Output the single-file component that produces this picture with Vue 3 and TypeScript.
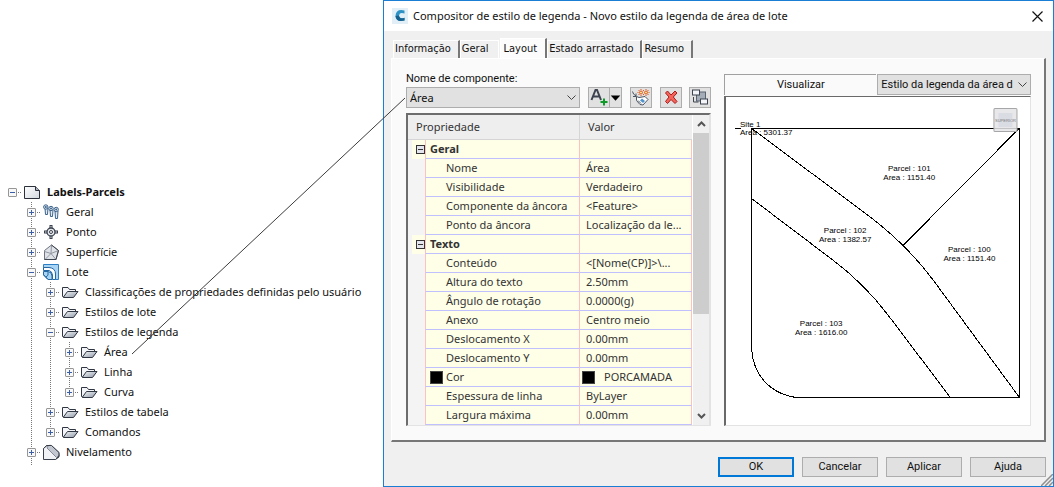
<script setup lang="ts">
import { ref } from 'vue'

type IconName = 'sheet' | 'markers' | 'point' | 'surface' | 'lot' | 'folder' | 'grading'

interface TreeRow {
  label: string
  icon: IconName
  open?: boolean
}

interface Level2 extends TreeRow {
  children?: TreeRow[]
}

interface Level1 extends TreeRow {
  children?: Level2[]
}

interface Property {
  name: string
  value: string
  group?: boolean
  swatch?: boolean
}

const tree: Level1[] = [
  { label: 'Geral', icon: 'markers' },
  { label: 'Ponto', icon: 'point' },
  { label: 'Superfície', icon: 'surface' },
  {
    label: 'Lote',
    icon: 'lot',
    open: true,
    children: [
      { label: 'Classificações de propriedades definidas pelo usuário', icon: 'folder' },
      { label: 'Estilos de lote', icon: 'folder' },
      {
        label: 'Estilos de legenda',
        icon: 'folder',
        open: true,
        children: [
          { label: 'Área', icon: 'folder' },
          { label: 'Linha', icon: 'folder' },
          { label: 'Curva', icon: 'folder' },
        ],
      },
      { label: 'Estilos de tabela', icon: 'folder' },
      { label: 'Comandos', icon: 'folder' },
    ],
  },
  { label: 'Nivelamento', icon: 'grading' },
]

const tabs = ['Informação', 'Geral', 'Layout', 'Estado arrastado', 'Resumo']
const activeTab = ref('Layout')

const properties: Property[] = [
  { name: 'Geral', value: '', group: true },
  { name: 'Nome', value: 'Área' },
  { name: 'Visibilidade', value: 'Verdadeiro' },
  { name: 'Componente da âncora', value: '<Feature>' },
  { name: 'Ponto da âncora', value: 'Localização da le...' },
  { name: 'Texto', value: '', group: true },
  { name: 'Conteúdo', value: '<[Nome(CP)]>\\...' },
  { name: 'Altura do texto', value: '2.50mm' },
  { name: 'Ângulo de rotação', value: '0.0000(g)' },
  { name: 'Anexo', value: 'Centro meio' },
  { name: 'Deslocamento X', value: '0.00mm' },
  { name: 'Deslocamento Y', value: '0.00mm' },
  { name: 'Cor', value: 'PORCAMADA', swatch: true },
  { name: 'Espessura de linha', value: 'ByLayer' },
  { name: 'Largura máxima', value: '0.00mm' },
]

const parcels = [
  { x: 183, y: 74, name: 'Parcel : 101', area: 'Area : 1151.40' },
  { x: 119, y: 136, name: 'Parcel : 102', area: 'Area : 1382.57' },
  { x: 243, y: 155, name: 'Parcel : 100', area: 'Area : 1151.40' },
  { x: 95, y: 229, name: 'Parcel : 103', area: 'Area : 1616.00' },
]

const actions = ['OK', 'Cancelar', 'Aplicar', 'Ajuda']
</script>

<template>
  <!-- Icon shapes shared by the tree rows -->
  <svg class="defs" aria-hidden="true">
    <defs>
      <linearGradient id="gFolder" x1="0" y1="0" x2="1" y2="1">
        <stop offset="0" stop-color="#f4f6f9" />
        <stop offset="1" stop-color="#8f98a6" />
      </linearGradient>
      <linearGradient id="gSheet" x1="0" y1="0" x2="1" y2="1">
        <stop offset="0" stop-color="#ffffff" />
        <stop offset="1" stop-color="#d3d8e0" />
      </linearGradient>
      <symbol id="sheet" viewBox="0 0 17 17">
        <path d="M.5 2.500H11.500L15.500 6.500V14.500H.5z" fill="url(#gSheet)" stroke="#2b303b" />
        <path d="M11.500 2.500V6.500H15.500" fill="#aab1bd" stroke="#2b303b" />
      </symbol>
      <symbol id="markers" viewBox="0 0 17 17">
        <g fill="#dfeaf5" stroke="#3d6289">
          <path d="M2 4L2.500 10.500H4.500L5 4" />
          <circle cx="2.800" cy="3" r="2.200" />
          <path d="M7 6L7.500 12.500H9.500L10 6" />
          <circle cx="8" cy="4.500" r="2.200" />
          <path d="M12 7L12.500 14.500H14.500L15 7" />
          <circle cx="13.200" cy="5.500" r="2.200" />
        </g>
        <g fill="#3d6289"><circle cx="2.800" cy="3" r="1" /><circle cx="8" cy="4.500" r="1" /><circle cx="13.200" cy="5.500" r="1" /></g>
      </symbol>
      <symbol id="point" viewBox="0 0 17 17">
        <path d="M8 1V15M1 8H15" stroke="#3a414d" stroke-width="3" />
        <path d="M8 2V14M2 8H14" stroke="#e6e9ee" />
        <circle cx="8" cy="8" r="4" fill="#e6e9ee" stroke="#3a414d" stroke-width="1.300" />
        <circle cx="8" cy="8" r="1.500" fill="#fff" stroke="#3a414d" />
      </symbol>
      <symbol id="surface" viewBox="0 0 17 17">
        <path d="M8.500 1L15.500 6.500 13 15.500H1.500V6.500z" fill="#dfe2e6" stroke="#6f7682" />
        <path d="M8.500 1L8 9.500 1.500 7.500M8 9.500L15.500 6.500M8 9.500L2 15.500M8 9.500L13 15.500" fill="none" stroke="#9299a3" />
        <path d="M8.500 1L15.500 6.500 13 15.500H1.500" fill="none" stroke="#3f4550" />
      </symbol>
      <symbol id="lot" viewBox="0 0 17 17">
        <path d="M.5 .5H15.500V15.500H12.500V9L8 4H.5z" fill="#a9d5f5" stroke="#2c7fc4" />
        <path d="M.5 3.500H6Q12.500 4 12.500 10V15.500H9.500V11Q9 7 6 6.500H.5z" fill="#fff" stroke="#2468a3" />
        <path d="M.5 7.500H5Q9 8 9 12V15.500H5L.5 11z" fill="#a9d5f5" stroke="#2468a3" />
        <path d="M.5 10.500L5 15.500M5 8Q6 12 3 13" fill="none" stroke="#2468a3" />
      </symbol>
      <symbol id="folder" viewBox="0 0 17 17">
        <path d="M.5 12.500V3.500H6L7.500 5.500H13.500V7.500L10 13H1.500z" fill="#f3f5f8" stroke="#2f3541" />
        <path d="M1.500 13L5.500 7.500H16L11.500 13.500H1.500z" fill="url(#gFolder)" stroke="#2f3541" />
      </symbol>
      <symbol id="grading" viewBox="0 0 17 17">
        <path d="M.5 15.500V4.500L4 1.500 16 10.500V13L12.500 15.500z" fill="#f1f2f5" stroke="#3a414d" />
        <path d="M4 4Q5 .5 8.500 1.500L16 8.500V11L13.500 13.500z" fill="#c2c7d0" stroke="#848b97" />
        <path d="M.5 4.500L3.500 1.500H8.500L16 8.500V12L12.500 15.500" fill="none" stroke="#3a414d" />
      </symbol>
    </defs>
  </svg>

  <div class="page">
    <nav class="tree" aria-label="Configurações">
      <div class="row root">
        <button class="expander" type="button" aria-label="Labels-Parcels"></button>
        <svg class="icon"><use href="#sheet" /></svg>
        <span>Labels-Parcels</span>
      </div>
      <ul class="branch first">
        <li v-for="a in tree" :key="a.label">
          <div class="row">
            <button class="expander" :class="{ plus: !a.open }" type="button" :aria-label="a.label"></button>
            <svg class="icon"><use :href="'#' + a.icon" /></svg>
            <span>{{ a.label }}</span>
          </div>
          <ul v-if="a.children" class="branch">
            <li v-for="b in a.children" :key="b.label">
              <div class="row">
                <button class="expander" :class="{ plus: !b.open }" type="button" :aria-label="b.label"></button>
                <svg class="icon"><use :href="'#' + b.icon" /></svg>
                <span>{{ b.label }}</span>
              </div>
              <ul v-if="b.children" class="branch">
                <li v-for="c in b.children" :key="c.label">
                  <div class="row">
                    <button class="expander plus" type="button" :aria-label="c.label"></button>
                    <svg class="icon"><use :href="'#' + c.icon" /></svg>
                    <span>{{ c.label }}</span>
                  </div>
                </li>
              </ul>
            </li>
          </ul>
        </li>
      </ul>
    </nav>

    <section class="dialog" role="dialog" aria-labelledby="dlgTitle">
      <header class="titlebar">
        <svg class="logo" viewBox="0 0 16 16" aria-hidden="true">
          <rect width="16" height="16" fill="#e3eff6" />
          <path d="M12.500 5.500V2.500Q4 .5 3.500 8 4 14.500 12.500 12.500V9.800Q7.500 11.500 7 7.500 7.500 4 12.500 5.500z" fill="#2e93c4" />
          <path d="M3.500 8Q4 14.500 12.500 12.500V9.800Q7.500 11.500 7 7.500z" fill="#17618f" />
        </svg>
        <h1 id="dlgTitle">Compositor de estilo de legenda - Novo estilo da legenda de área de lote</h1>
        <button class="close" type="button" aria-label="Fechar">
          <svg viewBox="0 0 11 11"><path d="M.5 .5L10.500 10.500M10.500 .5L.5 10.500" stroke="#111" stroke-width="1.200" /></svg>
        </button>
      </header>

      <div class="tabs" role="tablist">
        <button
          v-for="t in tabs"
          :key="t"
          class="tab"
          :class="{ active: t === activeTab }"
          type="button"
          role="tab"
          :aria-selected="t === activeTab"
          @click="activeTab = t"
        >{{ t }}</button>
      </div>

      <div class="panel">
        <div class="composer">
          <label class="caption" for="component">Nome de componente:</label>
          <div class="toolbar">
            <div class="combo">
              <select id="component"><option>Área</option></select>
              <svg class="chevron" viewBox="0 0 9 6"><path d="M.5 .5L4.500 4.500 8.500 .5" /></svg>
            </div>
            <div class="split">
              <button class="tool" type="button" aria-label="Criar componente de texto">
                <svg viewBox="0 0 20 18">
                  <path d="M2.500 11.500L6.500 1.500H8L12 11.500M4 8H10.500" fill="none" stroke="#3d4450" stroke-width="2" />
                  <path d="M15 10V17M11.500 13.500H18.500" stroke="#0e9a28" stroke-width="2" />
                </svg>
              </button>
              <button class="tool drop" type="button" aria-label="Mais tipos">
                <svg viewBox="0 0 10 18"><path d="M.5 7H9.500L5 12z" fill="#000" /></svg>
              </button>
            </div>
            <button class="tool" type="button" aria-label="Copiar componente">
              <svg viewBox="0 0 20 18">
                <path d="M5.500 8L8 9 14 8 17 11 12 16.500 9 16 5.500 12z" fill="#fff" stroke="#4d5563" />
                <path d="M1.500 3Q2 6 5 7.500M5 5V8H2M7 12L10 15" fill="none" stroke="#4d5563" />
                <path d="M11 10L14 12.500 12 14.500 9 12z" fill="#4f93cf" />
                <g fill="#ffe08a" stroke="#e0561e"><circle cx="10" cy="4" r="1.500" /><circle cx="15" cy="4" r="1.500" /></g>
                <path d="M10 .5V1.500M10 6.500V7.500M15 .5V1.500M15 6.500V7.500M6.500 4H7.500M17.500 4H18.500M7.500 1.500L8.500 2.500M17.500 1.500L16.500 2.500M7.500 6.500L8.500 5.500M17.500 6.500L16.500 5.500M12.500 1.500V2.500M12.500 5.500V6.500" stroke="#e0561e" />
              </svg>
            </button>
            <button class="tool" type="button" aria-label="Excluir componente">
              <svg viewBox="0 0 20 18">
                <path d="M4.500 4.500L6.500 2.500 10 6.500 14 2.500 16 4.500 12.300 8.500 16 13 14 15 10 11 6.500 15 4.500 13 8 8.500z" fill="#f4645a" stroke="#a81d1d" />
              </svg>
            </button>
            <button class="tool" type="button" aria-label="Ordem dos componentes">
              <svg viewBox="0 0 20 18">
                <g fill="#f2f4f7" stroke="#3d4450">
                  <rect x="6.500" y="3.500" width="9" height="9" fill="#a4acb8" stroke="#5b6370" />
                  <rect x="2.500" y="1.500" width="7" height="5" />
                  <rect x="10.500" y="10.500" width="7" height="5" />
                  <path d="M3.500 8.500V13.500H8.500" fill="none" />
                </g>
              </svg>
            </button>
          </div>

          <div class="grid">
            <table>
              <colgroup><col class="c-gutter" /><col class="c-name" /><col /></colgroup>
              <thead>
                <tr><th colspan="2" scope="col">Propriedade</th><th scope="col">Valor</th></tr>
              </thead>
              <tbody>
                <tr v-for="p in properties" :key="p.name" :class="{ group: p.group }">
                  <td class="gutter">
                    <button v-if="p.group" class="fold" type="button" :aria-label="p.name"></button>
                  </td>
                  <td class="name">
                    <div class="cell"><i v-if="p.swatch" class="swatch"></i>{{ p.name }}</div>
                  </td>
                  <td class="value">
                    <div class="cell"><i v-if="p.swatch" class="swatch"></i>{{ p.value }}</div>
                  </td>
                </tr>
              </tbody>
            </table>
            <div class="scroll" aria-hidden="true">
              <svg viewBox="0 0 9 6"><path d="M1 5L4.500 1.500 8 5" /></svg>
              <div class="track"><div class="thumb"></div></div>
              <svg viewBox="0 0 9 6"><path d="M1 1L4.500 4.500 8 1" /></svg>
            </div>
          </div>
        </div>

        <div class="preview">
          <div class="preview-head">
            <label class="preview-label" for="style">Visualizar</label>
            <div class="combo">
              <select id="style"><option>Estilo da legenda da área d</option></select>
              <svg class="chevron" viewBox="0 0 9 6"><path d="M.5 .5L4.500 4.500 8.500 .5" /></svg>
            </div>
          </div>
          <div class="canvas">
            <svg viewBox="0 0 303 327" role="img" aria-label="Lote">
              <g fill="none" stroke="#000" shape-rendering="crispEdges">
                <path d="M9 31.500H15M25.500 31.500H293.500V300.500H79C49 300.500 25.500 281 25.500 247z" />
                <path d="M25 31L139 116Q180 146.500 207 183L293 300" />
                <path d="M25 101L107 163Q138 186.400 162 218L224 300" />
                <path d="M293 31L176 149" />
              </g>
              <g class="cad">
                <text x="14" y="30">Site 1</text>
                <text x="14" y="38">Area : 5301.37</text>
                <g v-for="p in parcels" :key="p.name" text-anchor="middle">
                  <text :x="p.x" :y="p.y">{{ p.name }}</text>
                  <text :x="p.x" :y="p.y + 9">{{ p.area }}</text>
                </g>
              </g>
              <rect x="267.500" y="11.500" width="23" height="23" rx="1" fill="#e4e4e6" fill-opacity=".85" stroke="#a6a6a8" />
              <rect x="272" y="16" width="14" height="14" fill="#dadce3" />
              <text class="cube" x="279" y="25" text-anchor="middle">SUPERIOR</text>
            </svg>
          </div>
        </div>
      </div>

      <footer class="actions">
        <button v-for="a in actions" :key="a" type="button" :class="{ primary: a === 'OK' }">{{ a }}</button>
        <svg class="grip" viewBox="0 0 12 12" aria-hidden="true">
          <path d="M0 12L12 0M4 12L12 4M8 12L12 8" stroke="#8f8f8f" stroke-width="1.500" />
        </svg>
      </footer>
    </section>

    <svg class="leader" width="280" height="262" viewBox="0 0 280 262" aria-hidden="true">
      <path d="M2 258L275 2" stroke="#3c3c3c" fill="none" />
    </svg>
  </div>
</template>

<style>
body {
  background: #fff;
}
</style>

<style scoped>
.defs {
  position: absolute;
  width: 0;
  height: 0;
}
.page {
  position: relative;
  display: flex;
  align-items: flex-start;
  font: 11px/20px "Noto Sans", "Open Sans", sans-serif;
  color: #111;
}
button,
select {
  font: inherit;
  color: inherit;
  margin: 0;
  padding: 0;
}
svg {
  display: block;
}

/* tree */
.tree {
  flex: 0 0 375px;
  min-width: 0;
  padding: 182px 0 0 8px;
  white-space: nowrap;
}
ul {
  list-style: none;
  margin: 0;
  padding: 0;
}
.row {
  display: flex;
  align-items: center;
  height: 20px;
  background: repeating-linear-gradient(90deg, #777 0 1px, transparent 1px 2px) 10px 50% / 4px 1px no-repeat;
}
.root {
  font-weight: 700;
}
.branch {
  margin-left: 19px;
  background: repeating-linear-gradient(#777 0 1px, transparent 1px 2px) 4px 0 / 1px calc(100% - 10px) no-repeat;
}
.branch.first {
  padding-bottom: 3px;
  background-size: 1px 100%;
}
.expander {
  box-sizing: border-box;
  width: 9px;
  height: 9px;
  margin-right: 7px;
  border: 1px solid #969696;
  border-radius: 1px;
  background: linear-gradient(#3a5fa8, #3a5fa8) center / 5px 1px no-repeat, #f8f8f8;
}
.expander.plus {
  background: linear-gradient(#3a5fa8, #3a5fa8) center / 5px 1px no-repeat,
    linear-gradient(#3a5fa8, #3a5fa8) center / 1px 5px no-repeat, #f8f8f8;
}
.icon {
  flex: none;
  width: 17px;
  height: 17px;
  margin-right: 6px;
}

/* dialog */
.dialog {
  flex: 1 1 0;
  min-width: 0;
  border: 1px solid #1a7fd4;
  background: #f0f0f0;
}
.titlebar {
  display: flex;
  align-items: center;
  height: 30px;
  padding: 0 10px 0 8px;
  background: #fff;
}
.logo {
  width: 16px;
  height: 16px;
  margin-right: 5px;
}
h1 {
  flex: 1;
  margin: 0;
  font-size: 11px;
  font-weight: 400;
}
.close {
  width: 11px;
  height: 11px;
  border: 0;
  background: none;
}
.tabs {
  display: flex;
  align-items: flex-end;
  height: 27px;
  padding-left: 9px;
  font: 11px/16px "DejaVu Sans Condensed", "DejaVu Sans", sans-serif;
}
.tab {
  height: 18px;
  padding: 0 7px 2px 1px;
  border: 1px solid #fff;
  border-right: 2px solid #777;
  border-bottom: 0;
  background: #f0f0f0;
}
.tab:has(+ .active) {
  padding-right: 9px;
  border-right: 1px solid #fff;
}
.tab.active {
  height: 20px;
  margin-left: 1px;
  padding: 0 8px 0 3px;
  background: #fcfcfc;
}
.panel {
  display: grid;
  grid-template-columns: 305fr 306fr;
  gap: 13px;
  margin: 0 7px;
  padding: 11px 13px 14px 14px;
  border: 1px solid #fff;
  border-right: 2px solid #777;
  border-bottom: 2px solid #777;
  background: #fafafa;
}
.caption,
.preview-head,
.actions {
  font: 11px/20px Roboto, "Noto Sans", sans-serif;
}
.caption {
  display: block;
  line-height: 17px;
}
.toolbar {
  display: flex;
  align-items: center;
  justify-content: space-between;
  height: 21px;
}
.combo {
  position: relative;
}
.combo select {
  box-sizing: border-box;
  display: block;
  width: 100%;
  height: 21px;
  padding: 0 14px 0 3px;
  border: 1px solid #adadad;
  border-radius: 0;
  background: #e1e1e1;
  appearance: none;
}
.toolbar .combo {
  width: 174px;
}
.chevron {
  position: absolute;
  top: 8px;
  right: 4px;
  width: 9px;
  height: 6px;
  fill: none;
  stroke: #444;
  pointer-events: none;
}
.tool {
  box-sizing: border-box;
  width: 22px;
  height: 21px;
  border: 1px solid #adadad;
  background: #e1e1e1;
}
.tool svg {
  width: 100%;
  height: 19px;
}
.split {
  display: flex;
}
.drop {
  width: 12px;
  border-left: 0;
}

/* property grid */
.grid {
  display: flex;
  margin-top: 5px;
  border: 2px solid #6d6d6d;
  border-right: 2px solid #e3e3e3;
  border-bottom: 1px solid #e3e3e3;
  background: #fff;
  color: #333;
}
table {
  flex: 1;
  width: 0;
  table-layout: fixed;
  border-spacing: 0;
  background: #f4f4f4;
}
.c-gutter {
  width: 17px;
}
.c-name {
  width: 154px;
}
th {
  box-sizing: border-box;
  height: 25px;
  padding: 0 0 0 8px;
  border-bottom: 1px solid #d5d5d5;
  background: #eee;
  font-weight: 400;
  text-align: left;
}
th + th {
  border-left: 1px solid #d5d5d5;
}
td {
  box-sizing: border-box;
  height: 19px;
  padding: 0;
  line-height: 18px;
}
.name,
.value {
  border-left: 1px solid #ffc0c0;
  border-bottom: 1px solid #c0c0ff;
  background: #ffffe8;
}
.value {
  border-right: 1px solid #ffc0c0;
}
.group .gutter {
  background: linear-gradient(#ffffe8, #ffffe8) 4px 0 no-repeat;
}
.fold {
  box-sizing: border-box;
  display: block;
  width: 9px;
  height: 9px;
  margin-left: 8px;
  border: 1px solid #333;
  background: linear-gradient(#333, #333) center / 5px 1px no-repeat, #e4e6ee;
}
.cell {
  display: flex;
  align-items: center;
  height: 18px;
  padding-left: 6px;
  overflow: hidden;
  white-space: nowrap;
}
.name .cell {
  padding-left: 20px;
}
.group .name .cell {
  padding-left: 4px;
  font-weight: 700;
}
.swatch {
  box-sizing: border-box;
  width: 13px;
  height: 13px;
  border: 1px solid #444;
  background: #000;
}
.name .swatch {
  margin: 0 3px 0 -16px;
}
.value .swatch {
  margin: 0 9px 0 -4px;
}
.scroll {
  display: flex;
  flex-direction: column;
  align-items: center;
  width: 16px;
  margin-left: 1px;
  background: #f0f0f0;
}
.scroll svg {
  width: 9px;
  height: 6px;
  margin: 6px 0;
  fill: none;
  stroke: #555;
  stroke-width: 2;
}
.track {
  flex: 1;
  width: 100%;
}
.thumb {
  height: 66%;
  background: #cdcdcd;
}

/* preview */
.preview {
  margin-top: 4px;
}
.preview-head {
  display: grid;
  grid-template-columns: 152fr 154fr;
  gap: 1px;
}
.preview-label {
  border: 1px solid #a0a0a0;
  border-width: 1px 0 0 1px;
  text-align: center;
}
.canvas {
  margin-top: 1px;
  border: 1px solid #e3e3e3;
  border-top: 1px solid #696969;
  border-left: 2px solid #696969;
  background: #fff;
}
.canvas svg {
  width: 100%;
  height: auto;
}
.cad {
  font: 8px "Liberation Sans", Arial, sans-serif;
}
.cube {
  font: 4px "Liberation Sans", Arial, sans-serif;
  fill: #777;
}

/* footer */
.actions {
  position: relative;
  display: flex;
  justify-content: flex-end;
  gap: 8px;
  padding: 15px 7px 9px;
}
.actions button {
  box-sizing: border-box;
  width: 76px;
  height: 20px;
  border: 1px solid #adadad;
  background: #e1e1e1;
  line-height: 16px;
}
.actions .primary {
  border: 2px solid #0078d7;
}
.grip {
  position: absolute;
  right: 0;
  bottom: 0;
  width: 12px;
  height: 12px;
}

/* leader line from the tree item to the component box */
.leader {
  position: absolute;
  left: 130px;
  top: 96px;
  pointer-events: none;
}
</style>
